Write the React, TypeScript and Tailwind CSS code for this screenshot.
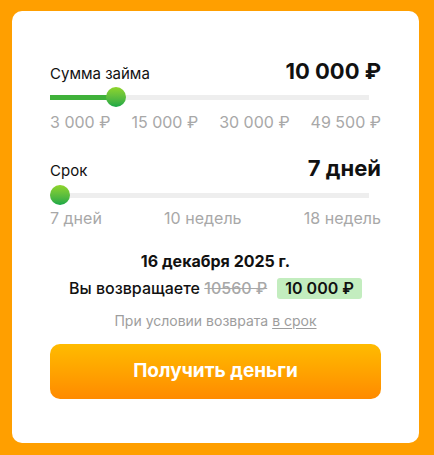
export default function App() {
  return (
    <div className="min-h-screen w-[434px] h-[455px] bg-[#ff9f00] pt-[11px] px-3 font-['Inter',sans-serif]">
      <div className="h-[432px] w-[407px] rounded-[10px] bg-white px-[38px] pt-[49px]">
        {/* Sum */}
        <div className="flex items-end justify-between">
          <span className="text-[15px] leading-none text-[#111] pb-[1px]">Сумма займа</span>
          <span className="text-[22px] font-bold leading-none text-[#111]">10 000 ₽</span>
        </div>
        <div className="relative mt-[13px] h-[5px] w-[319px] bg-[#eeeeee]">
          <div className="h-full w-[66px] bg-[#3fb13a]" />
          <div className="absolute left-[56px] top-[-8px] h-[20px] w-[20px] rounded-full bg-gradient-to-b from-[#8ed52a] to-[#12a846]" />
        </div>
        <div className="mt-[14px] flex justify-between text-[16px] leading-none text-[#a8a8a8]">
          <span>3 000 ₽</span>
          <span>15 000 ₽</span>
          <span>30 000 ₽</span>
          <span>49 500 ₽</span>
        </div>

        {/* Term */}
        <div className="mt-[27px] flex items-end justify-between">
          <span className="text-[15px] leading-none text-[#111] pb-[1px]">Срок</span>
          <span className="text-[22px] font-bold leading-none text-[#111]">7 дней</span>
        </div>
        <div className="relative mt-[14px] h-[5px] w-[319px] bg-[#eeeeee]">
          <div className="absolute left-0 top-[-8px] h-[20px] w-[20px] rounded-full bg-gradient-to-b from-[#8ed52a] to-[#12a846]" />
        </div>
        <div className="mt-[12px] flex justify-between text-[16px] leading-none text-[#a8a8a8]">
          <span>7 дней</span>
          <span>10 недель</span>
          <span>18 недель</span>
        </div>

        {/* Summary */}
        <div className="mt-[27px] text-center text-[16px] font-bold leading-none text-[#111]">16 декабря 2025 г.</div>
        <div className="mt-[9px] flex items-center justify-center gap-[10px] text-[16px] font-medium leading-[21px] text-[#111]">
          <span>
            Вы возвращаете <span className="text-[#a8a8a8] line-through">10560 ₽</span>
          </span>
          <span className="rounded-[3px] bg-[#c3edbf] px-[8px] leading-[21px] font-semibold">10 000 ₽</span>
        </div>
        <div className="mt-[15px] text-center text-[14px] leading-none text-[#9d9d9d]">
          При условии возврата <span className="underline underline-offset-2">в срок</span>
        </div>

        <button className="mt-[16px] flex h-[55px] w-[331px] items-center justify-center rounded-[10px] bg-gradient-to-b from-[#ffbb00] to-[#ff8a00] text-[19px] font-bold text-white">
          Получить деньги
        </button>
      </div>
    </div>
  );
}
